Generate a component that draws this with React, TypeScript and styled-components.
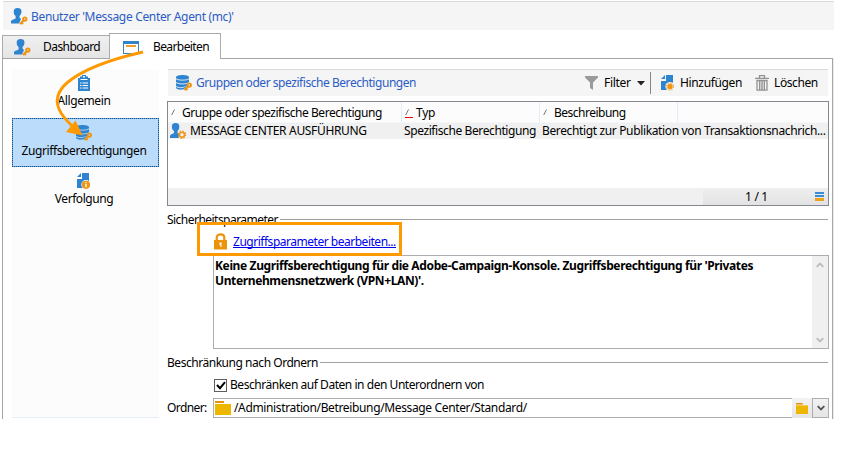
import React from "react";
import styled, { createGlobalStyle, css } from "styled-components";

const GlobalStyle = createGlobalStyle`
  *, *::before, *::after { box-sizing: border-box; }
  body { margin: 0; background: #fff; color: #000; overflow: hidden;
    font: 12px/16px "Noto Sans", "Open Sans", sans-serif; }
  svg { display: block; flex: none; }
`;

const Text = styled.span<{ $track?: number; $bold?: boolean }>`
  display: block;
  white-space: nowrap;
  letter-spacing: ${(p) => p.$track ?? -0.3}px;
  font-weight: ${(p) => (p.$bold ? 700 : 400)};
`;

const Screen = styled.div`
  position: relative;
  width: 857px;
  height: 450px;
  padding: 1px 0 0 2px;
  overflow: hidden;
`;

const TitleBar = styled.header`
  display: flex;
  align-items: center;
  width: 831px;
  height: 29px;
  margin-left: 1px;
  padding: 1px 0 0 8px;
  gap: 3px;
  background: #f5f5f5;
  border-top: 1px solid #dadada;
  color: #2c5cc5;
`;

const Tabs = styled.nav`
  display: flex;
  align-items: flex-end;
  height: 28px;
`;

const Tab = styled.div<{ $active?: boolean }>`
  display: flex;
  align-items: center;
  border: 1px solid #ababab;
  ${(p) =>
    p.$active
      ? css`
          width: 112px;
          height: 26px;
          padding: 1px 0 0 13px;
          gap: 14px;
          margin-bottom: -1px;
          border-bottom: 0;
          background: #fff;
          z-index: 1;
        `
      : css`
          width: 107px;
          height: 23px;
          padding: 0 0 0 11px;
          gap: 12px;
          border-right: 0;
          border-bottom: 0;
          background: linear-gradient(#f0f0f0, #e5e5e5);
        `}
`;

const Panel = styled.div`
  display: flex;
  width: 831px;
  height: 361px;
  padding: 10px 3px 0 9px;
  gap: 8px;
  border: 1px solid #a6a6a6;
  border-bottom: 0;
  box-shadow: 1px 0 0 #ececec;
`;

const Sidebar = styled.aside`
  width: 147px;
  height: 349px;
  background: #fcfcfc;
  border-bottom: 1px solid #e6edf7;
`;

const SideItem = styled.div<{ $selected?: boolean }>`
  display: flex;
  flex-direction: column;
  align-items: center;
  height: 49px;
  padding: 6px 3px 0 0;
  gap: 2px;
  ${(p) =>
    p.$selected &&
    css`
      background: #bcdcfb;
      border: 1px solid #5ba3ea;
      outline: 1px dotted #1c4f80;
      outline-offset: -1px;
    `}
`;

const Main = styled.main`
  display: flex;
  flex-direction: column;
  width: 662px;
`;

const Toolbar = styled.div`
  display: flex;
  align-items: center;
  width: 660px;
  height: 27px;
  margin-left: 1px;
  padding-left: 8px;
  background: #f5f5f5;
  border-top: 1px solid #d9d9d9;
`;

const ToolTitle = styled.div`
  display: flex;
  align-items: center;
  gap: 4px;
  width: 409px;
  color: #2c5cc5;
`;

const ToolButton = styled.div<{ $width: number; $gap: number }>`
  display: flex;
  align-items: center;
  width: ${(p) => p.$width}px;
  gap: ${(p) => p.$gap}px;
`;

const Divider = styled.div`
  width: 1px;
  height: 22px;
  margin-right: 10px;
  background: #858585;
`;

const Table = styled.div`
  display: flex;
  flex-direction: column;
  width: 662px;
  height: 105px;
  margin-top: 5px;
  border: 1px solid #828790;
`;

const HeadRow = styled.div`
  display: grid;
  grid-template-columns: 234px 138px 138px 1fr;
  height: 20px;
  background: #fcfcfc;
`;

const HeadCell = styled.div`
  display: flex;
  align-items: flex-start;
  padding: 3px 0 0 3px;
  gap: 3px;
  border-right: 1px solid #e2edf9;
  &:last-child { border: 0; }
`;

const DataRow = styled.div`
  display: grid;
  grid-template-columns: 235px 138px 1fr;
  height: 17px;
  background: #f0f0f0;
  border-top: 1px solid #f3f6fa;
`;

const DataCell = styled.div`
  display: flex;
  align-items: center;
  padding-left: 1px;
  gap: 3px;
  &:first-child { padding-left: 2px; }
`;

const Footer = styled.div`
  display: flex;
  justify-content: flex-end;
  height: 17px;
  margin-top: auto;
  background: #f0f0f0;
`;

const Pager = styled.div`
  display: flex;
  align-items: center;
  justify-content: space-between;
  width: 125px;
  padding: 0 4px 0 42px;
  background: linear-gradient(#efefef, #e2e2e2);
`;

const SectionTitle = styled.div`
  display: flex;
  align-items: center;
  height: 16px;
  margin-top: 5px;
  padding-right: 1px;
  gap: 2px;
  &::after { content: ""; flex: 1; height: 1px; background: #a0a0a0; }
`;

const SectionLabel = styled(Text)`
  padding-top: 1px;
`;

const LinkRow = styled.div`
  display: flex;
  align-items: center;
  width: 205px;
  height: 34px;
  margin: -5px 0 0 30px;
  padding: 4px 0 0 14px;
  gap: 6px;
  border: 3px solid #ff9900;
  position: relative;
  z-index: 1;
`;

const Link = styled(Text)`
  height: 14px;
  line-height: 15px;
  color: #0000f0;
  border-bottom: 1px solid #0000f0;
`;

const Memo = styled.div`
  display: flex;
  justify-content: space-between;
  width: 616px;
  height: 94px;
  margin: -1px 0 0 46px;
  border: 1px solid #abadb3;
`;

const MemoText = styled(Text)`
  padding: 2px 0 0 1px;
  line-height: 15px;
`;

const ScrollTrack = styled.div`
  display: flex;
  flex-direction: column;
  justify-content: space-between;
  align-items: center;
  width: 16px;
  padding: 6px 0 5px;
  background: #f0f0f0;
`;

const CheckRow = styled.div`
  display: flex;
  align-items: center;
  height: 16px;
  margin: 7px 0 0 47px;
  gap: 3px;
`;

const Checkbox = styled.div`
  display: grid;
  place-items: center;
  width: 13px;
  height: 13px;
  border: 1px solid #5f5f5f;
  background: #fff;
`;

const FolderRow = styled.div`
  display: flex;
  align-items: center;
  height: 20px;
  margin-top: 5px;
`;

const FieldLabel = styled.div`
  width: 46px;
  padding-bottom: 1px;
`;

const Field = styled.div`
  display: flex;
  align-items: center;
  width: 579px;
  height: 20px;
  padding: 0 0 1px 1px;
  gap: 3px;
  border: 1px solid #abadb3;
  border-right: 0;
`;

const FieldButton = styled.div<{ $boxed?: boolean }>`
  display: grid;
  place-items: center;
  width: ${(p) => (p.$boxed ? 17 : 20)}px;
  height: 20px;
  background: linear-gradient(#f2f2f2, #e5e5e5);
  border: ${(p) => (p.$boxed ? "1px solid #abadb3" : "0")};
`;

const Arrow = styled.svg`
  position: absolute;
  left: 0;
  top: 0;
  z-index: 2;
`;

const KeyShape = ({ x, y }: { x: number; y: number }) => (
  <g transform={`translate(${x} ${y})`} stroke="#ef9310" fill="none">
    <circle cx="5.100" cy="2.300" r="1.700" strokeWidth="1.900" />
    <path d="M4.100 3.400 .3 7.100M1.300 5.300 3.300 7.300" strokeWidth="2.100" />
  </g>
);

const UserKey = () => (
  <svg width="17" height="17" viewBox="0 0 17 17">
    <path fill="#2f84d0" d="M6.500 0C9.500 0 10.700 1.500 10.500 4 10.400 6 9.300 7 8.500 8v1.500L10 11l-2 4.500H0v-2c0-1.700 3-2 4.600-3V8C3.500 7 2.700 6 2.700 4 2.500 1.500 4 0 6.500 0Z" />
    <KeyShape x={8.700} y={8.800} />
  </svg>
);

const UserGear = () => (
  <svg width="17" height="16" viewBox="0 0 17 16">
    <path fill="#2f84d0" d="M5.500 0c2.800 0 4 1.500 3.800 4 0 2-.9 3-1.700 4v2l1.200 1v4H0v-2c0-1.700 2.500-2 4-3V8C2.700 7 1.900 6 1.900 4 1.700 1.500 3 0 5.500 0Z" />
    <circle cx="12" cy="11.700" r="2.500" fill="none" stroke="#ed9518" strokeWidth="1.500" />
    <circle cx="12" cy="11.700" r="3.700" fill="none" stroke="#ed9518" strokeWidth="1.200" strokeDasharray="1.400 1.500" />
  </svg>
);

const WindowIcon = () => (
  <svg width="16" height="13" viewBox="0 0 16 13">
    <path fill="#2f84d0" d="M0 0h16v13H0Z" />
    <path fill="#fff" d="M1 3h14v9H1Z" />
    <path fill="#ef9d2d" d="M3 4h10v2H3Z" />
  </svg>
);

const Clipboard = () => (
  <svg width="12" height="16" viewBox="0 0 12 16">
    <path fill="#2f84d0" d="M0 3h2V1.500h2V0h4v1.500h2V3h2v13H0Z" />
    <path fill="#fff" d="M5 1h2v1.500H5ZM2.500 4h7v1h-7ZM2 7.500h1.500v1H2Zm2.500 0H10v1H4.500ZM2 10h1.500v1H2Zm2.500 0H10v1H4.500ZM2 12.500h1.500v1H2Zm2.500 0H10v1H4.500Z" />
  </svg>
);

const Database = ({ gap = "#f5f5f5" }: { gap?: string }) => (
  <svg width="16" height="16" viewBox="0 0 16 16">
    <path fill="#2f84d0" d="M0 2.300C0-.7 13-.7 13 2.300v6L8 14.200C4 15.200 0 14.500 0 12.500Z" />
    <path fill="none" stroke={gap} strokeWidth=".9" d="M0 3.700c2 1.900 11 1.900 13 0M0 7.500c2 1.900 11 1.900 13 0M0 11.300c2 1.900 8 1.800 9 0" />
    <KeyShape x={8.200} y={7.800} />
  </svg>
);

const PageShape = () => (
  <>
    <path fill="#2f84d0" d="M5 0h7v15H0V6h5Z" />
    <path fill="#2f84d0" d="M0 4 4 0v4Z" />
  </>
);

const PageInfo = () => (
  <svg width="14" height="16" viewBox="0 0 14 16">
    <PageShape />
    <circle cx="9" cy="11.800" r="4.700" fill="#fcfcfc" />
    <circle cx="9" cy="11.800" r="4.100" fill="#ef9310" />
    <path stroke="#fff" strokeWidth="1.400" d="M9 11v3.200M9 9v1.200" />
  </svg>
);

const PageNew = () => (
  <svg width="14" height="16" viewBox="0 0 14 16">
    <PageShape />
    <circle cx="9" cy="11.500" r="4.600" fill="#f5f5f5" />
    <circle cx="9" cy="11.500" r="2.700" fill="#ef9310" />
    <circle cx="9" cy="11.500" r="3.600" fill="none" stroke="#ef9310" strokeDasharray="1.400 1.430" />
  </svg>
);

const Funnel = () => (
  <svg width="13" height="14" viewBox="0 0 13 14">
    <path fill="#9a9a9a" d="M0 0h13v1.500L8 6.500V14l-3-2V6.500L0 1.500Z" />
  </svg>
);

const Trash = () => (
  <svg width="14" height="16" viewBox="0 0 14 16">
    <path fill="none" stroke="#929292" strokeWidth="1.300" d="M0 3.300h14M4.500 3V.7h5V3M2 5.500h10V15.200H2Z" />
    <path stroke="#929292" strokeWidth="1.400" d="M4.700 6v9M7 6v9M9.300 6v9" />
  </svg>
);

const Caret = () => (
  <svg width="8" height="5" viewBox="0 0 8 5"><path d="M0 0h8L4 4.500Z" fill="#222" /></svg>
);

const SortMark = ({ active }: { active?: boolean }) => (
  <svg width="8" height="14" viewBox="0 0 8 14">
    <path d="M.7 10 3.500 4.500" stroke="#777" fill="none" />
    {active && <path d="M0 12h8v1H0Z" fill="#f00000" />}
  </svg>
);

const Lock = () => (
  <svg width="13" height="17" viewBox="0 0 13 17">
    <path d="M2.700 8V4.500C2.700.2 10.300.2 10.300 4.500V8" fill="none" stroke="#ec930e" strokeWidth="2.200" />
    <path d="M0 7h13v9.500H0Z" fill="#ec930e" />
    <path d="M5.500 9.500h2v4.500h-1v-2h-1Z" fill="#fff" />
  </svg>
);

const Lines = () => (
  <svg width="9" height="9" viewBox="0 0 9 9">
    <path d="M0 0h9v2H0ZM0 3h9v2H0Z" fill="#3a8cd6" />
    <path d="M0 6h9v3H0Z" fill="#eda01c" />
  </svg>
);

const Folder = ({ w, h }: { w: number; h: number }) => (
  <svg width={w} height={h} viewBox="0 0 16 14" preserveAspectRatio="none">
    <path d="M0 0h9v2H0Z" fill="#e8920c" />
    <path d="M0 3h16v11H0Z" fill="#edb700" />
  </svg>
);

const Chevron = ({ up, color }: { up?: boolean; color: string }) => (
  <svg width="8" height="6" viewBox="0 0 8 6">
    <path d={up ? "M.7 4.800 4 1.500 7.300 4.800" : "M.7 1.200 4 4.500 7.300 1.200"} fill="none" stroke={color} strokeWidth="1.900" />
  </svg>
);

const Check = () => (
  <svg width="10" height="9" viewBox="0 0 10 9">
    <path d="M1 4 4 7.200 9 1.200" fill="none" stroke="#000" strokeWidth="2" />
  </svg>
);

export default function App() {
  return (
    <>
      <GlobalStyle />
      <Screen>
        <TitleBar>
          <UserKey />
          <Text $track={-0.33}>Benutzer 'Message Center Agent (mc)'</Text>
        </TitleBar>
        <Tabs>
          <Tab><UserKey /><Text $track={-0.55}>Dashboard</Text></Tab>
          <Tab $active><WindowIcon /><Text $track={-0.6}>Bearbeiten</Text></Tab>
        </Tabs>
        <Panel>
          <Sidebar>
            <SideItem><Clipboard /><Text $track={-0.4}>Allgemein</Text></SideItem>
            <SideItem $selected><Database gap="#bcdcfb" /><Text $track={-0.4}>Zugriffsberechtigungen</Text></SideItem>
            <SideItem><PageInfo /><Text $track={-0.45}>Verfolgung</Text></SideItem>
          </Sidebar>
          <Main>
            <Toolbar>
              <ToolTitle><Database /><Text $track={-0.45}>Gruppen oder spezifische Berechtigungen</Text></ToolTitle>
              <ToolButton $width={65} $gap={6}><Funnel /><Text>Filter</Text><Caret /></ToolButton>
              <Divider />
              <ToolButton $width={94} $gap={5}><PageNew /><Text $track={-0.35}>Hinzufügen</Text></ToolButton>
              <ToolButton $width={70} $gap={5}><Trash /><Text $track={-0.4}>Löschen</Text></ToolButton>
            </Toolbar>
            <Table>
              <HeadRow>
                <HeadCell><SortMark /><Text $track={-0.45}>Gruppe oder spezifische Berechtigung</Text></HeadCell>
                <HeadCell><SortMark active /><Text>Typ</Text></HeadCell>
                <HeadCell><SortMark /><Text $track={-0.5}>Beschreibung</Text></HeadCell>
                <HeadCell />
              </HeadRow>
              <DataRow>
                <DataCell><UserGear /><Text $track={-0.33}>MESSAGE CENTER AUSFÜHRUNG</Text></DataCell>
                <DataCell><Text $track={-0.4}>Spezifische Berechtigung</Text></DataCell>
                <DataCell><Text $track={-0.36}>Berechtigt zur Publikation von Transaktionsnachrich...</Text></DataCell>
              </DataRow>
              <Footer><Pager><Text>1 / 1</Text><Lines /></Pager></Footer>
            </Table>
            <SectionTitle><SectionLabel $track={-0.53}>Sicherheitsparameter</SectionLabel></SectionTitle>
            <LinkRow><Lock /><Link $track={-0.48}>Zugriffsparameter bearbeiten...</Link></LinkRow>
            <Memo>
              <MemoText $bold $track={-0.375}>
                Keine Zugriffsberechtigung für die Adobe-Campaign-Konsole. Zugriffsberechtigung für 'Privates
                <br />
                Unternehmensnetzwerk (VPN+LAN)'.
              </MemoText>
              <ScrollTrack><Chevron up color="#bdbdbd" /><Chevron color="#bdbdbd" /></ScrollTrack>
            </Memo>
            <SectionTitle><SectionLabel $track={-0.46}>Beschränkung nach Ordnern</SectionLabel></SectionTitle>
            <CheckRow><Checkbox><Check /></Checkbox><Text $track={-0.46}>Beschränken auf Daten in den Unterordnern von</Text></CheckRow>
            <FolderRow>
              <FieldLabel><Text $track={-0.6}>Ordner:</Text></FieldLabel>
              <Field><Folder w={16} h={14} /><Text $track={-0.36}>/Administration/Betreibung/Message Center/Standard/</Text></Field>
              <FieldButton><Folder w={12} h={11} /></FieldButton>
              <FieldButton $boxed><Chevron color="#555" /></FieldButton>
            </FolderRow>
          </Main>
        </Panel>
        <Arrow width="200" height="150" viewBox="0 0 200 150">
          <path d="M143 52C112 59 84 69 68 82C56 92 55 103 61 113Q65 119 73 127" fill="none" stroke="#ff9900" strokeWidth="2.900" />
          <path d="M82.500 135.500 66 132 75.500 120.500Z" fill="#ff9900" />
        </Arrow>
      </Screen>
    </>
  );
}
